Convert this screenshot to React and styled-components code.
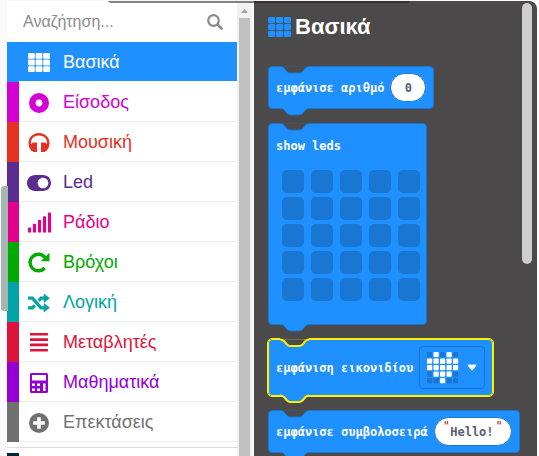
import React from "react";
import styled, { createGlobalStyle } from "styled-components";
import { FaToggleOn, FaSignal } from "react-icons/fa";

const BLUE = "#1e90ff";
const EDGE = "#1976cc";
const YELLOW = "#fff200";
const FLYOUT = "#4b4949";

const Global = createGlobalStyle`
  *, *::before, *::after { box-sizing: border-box; }
  body { margin: 0; background: #fafafd; font-family: "Liberation Sans", Arial, sans-serif; }
`;

const Page = styled.div`
  position: relative;
  display: grid;
  grid-template-columns: 247fr 283fr;
  height: 100vh;
  padding: 1px 2px 0 7px;
  overflow: hidden;
`;

const TopShade = styled.div`
  position: absolute;
  top: 0;
  left: 20%;
  right: 24%;
  height: 3px;
  border-radius: 0 0 12px 12px;
  background: rgba(30, 35, 30, 0.55);
  border-top: 1px solid #f4f4f4;
`;

const SideHandle = styled.div`
  position: absolute;
  top: 186px;
  left: 1px;
  width: 7px;
  height: 125px;
  border-radius: 3px 0 0 3px;
  background: #a5b5b2;
`;

const Toolbox = styled.aside`
  display: flex;
  min-width: 0;
  background: #f1f1f1;
`;

const ToolboxBody = styled.div`
  flex: 1;
  min-width: 0;
  background: #fff;
`;

const SearchBar = styled.label`
  display: flex;
  align-items: center;
  height: 41px;
  padding: 0 14px 0 16px;
`;

const SearchInput = styled.input`
  flex: 1;
  min-width: 0;
  padding: 0;
  border: 0;
  outline: 0;
  background: transparent;
  font: 16px "Liberation Sans", Arial, sans-serif;
  color: #444;
  &::placeholder { color: #8a8a8a; opacity: 1; }
`;

const CategoryList = styled.nav`
  display: flex;
  flex-direction: column;
`;

const Category = styled.button`
  display: flex;
  align-items: center;
  height: 40px;
  padding: 0;
  border: 0;
  background: ${(p) => (p.$active ? p.$color : "#fff")};
  color: ${(p) => (p.$active ? "#fff" : p.$color)};
  font: 18px "Liberation Sans", Arial, sans-serif;
  text-align: left;
  cursor: pointer;
`;

const ColorBar = styled.span`
  width: 12px;
  height: 40px;
  background: ${(p) => p.$color};
`;

const CategoryLabel = styled.span`
  display: flex;
  flex: 1;
  align-items: center;
  gap: 11px;
  height: 40px;
  padding: 2px 0 0 7px;
  border-bottom: 1px solid ${(p) => (p.$active ? "#fff" : "#ececec")};
`;

const IconCell = styled.span`
  display: flex;
  justify-content: center;
  width: 26px;
`;

const NextSection = styled.div`
  height: 60px;
  margin-top: 5px;
  padding-top: 5px;
  border-top: 1px solid #dedede;
`;

const DarkBar = styled.div`
  width: 12px;
  height: 40px;
  background: #002b36;
`;

const ScrollGutter = styled.div`
  display: flex;
  flex-direction: column;
  width: 17px;
  padding: 7px 2px 0 2px;
  border-right: 2px solid #fafafa;
`;

const ScrollThumb = styled.div`
  flex: 1;
  margin-top: 5px;
  background: #c0c0c0;
`;

const Flyout = styled.main`
  display: flex;
  justify-content: space-between;
  min-width: 0;
  padding: 2px 5px 0 14px;
  background: ${FLYOUT};
  border-radius: 0 8px 0 0;
  overflow: hidden;
`;

const FlyoutContent = styled.div`
  display: flex;
  flex-direction: column;
  align-items: flex-start;
`;

const FlyoutThumb = styled.div`
  width: 10px;
  height: 261px;
  border-radius: 5px;
  background: #cecece;
`;

const Title = styled.h1`
  display: flex;
  align-items: center;
  gap: 4px;
  height: 24px;
  margin: 12px 0 27px;
  color: #fff;
  font-size: 22px;
  line-height: 24px;
`;

const TitleIcon = styled.span`
  display: flex;
  color: ${BLUE};
`;

const BlockStack = styled.div`
  display: flex;
  flex-direction: column;
  align-items: flex-start;
  gap: 14px;
`;

const BlockBox = styled.div`
  position: relative;
  display: flex;
  flex-direction: ${(p) => (p.$column ? "column" : "row")};
  align-items: ${(p) => (p.$column ? "flex-start" : "center")};
  gap: ${(p) => (p.$column ? "16px" : "6px")};
  padding: ${(p) => (p.$column ? "14px 6px 23px 7px" : "6px 7px")};
  background: ${BLUE};
  border: 1px solid ${(p) => (p.$selected ? YELLOW : EDGE)};
  border-radius: 4px;
  outline: ${(p) => (p.$selected ? `1px solid ${YELLOW}` : "0")};
  color: #fff;
  font: bold 12px/16px "DejaVu Sans Mono", monospace;
  white-space: nowrap;
`;

const Connector = styled.svg`
  position: absolute;
  left: 11px;
  ${(p) => (p.$bottom ? "bottom: -9px;" : "top: -2px;")}
`;

const NumberInput = styled.input`
  width: 36px;
  height: 29px;
  padding: 0;
  border: 1px solid ${EDGE};
  border-radius: 15px;
  background: #fff;
  color: #575e75;
  font: bold 12px "DejaVu Sans Mono", monospace;
  text-align: center;
`;

const TextPill = styled.label`
  display: flex;
  justify-content: space-between;
  width: 78px;
  height: 29px;
  padding: 0 8px;
  border: 1px solid ${EDGE};
  border-radius: 15px;
  background: #fff;
  color: #a31515;
  font-weight: normal;
`;

const TextInput = styled.input`
  width: 45px;
  padding: 0;
  border: 0;
  background: transparent;
  color: #575e75;
  font: bold 12px "DejaVu Sans Mono", monospace;
`;

const LedGrid = styled.div`
  display: grid;
  grid-template-columns: repeat(5, 22px);
  gap: 4px 7px;
  padding-left: 6px;
`;

const Led = styled.button`
  height: 23px;
  padding: 0;
  border: 0;
  border-radius: 5px;
  background: #1976d2;
`;

const IconPicker = styled.button`
  display: flex;
  align-items: center;
  gap: 8px;
  height: 43px;
  padding: 0 7px;
  border: 1px solid ${EDGE};
  border-radius: 4px;
  background: transparent;
`;

function GridIcon({ width = 22, height = 19 }) {
  return (
    <svg width={width} height={height} viewBox="0 0 22 19" fill="currentColor" aria-hidden="true">
      {[0, 1, 2].map((r) =>
        [0, 1, 2].map((c) => (
          <rect key={`${r}${c}`} x={c * 7.6} y={r * 6.6} width="6.8" height="5.8" rx="1" />
        ))
      )}
    </svg>
  );
}

const TargetIcon = () => (
  <svg width="20" height="20" viewBox="0 0 20 20" aria-hidden="true">
    <circle cx="10" cy="10" r="6.7" fill="none" stroke="currentColor" strokeWidth="6.6" />
  </svg>
);

const HeadphonesIcon = () => (
  <svg width="22" height="19" viewBox="0 0 22 19" fill="currentColor" aria-hidden="true">
    <path d="M11 0C5 0 .5 4.4.5 10c0 3.5 1.400 6.400 3.200 8l1.300.2V19H9V9.400H6.500C5 9.400 3.700 10 2.900 11 2.500 6 6 2.600 11 2.600S19.500 6 19.100 11c-.8-1-2.100-1.600-3.600-1.600H13V19h4v-.8l1.300-.2c1.800-1.600 3.200-4.500 3.200-8C21.500 4.400 17 0 11 0Z" />
  </svg>
);

const RedoIcon = () => (
  <svg width="22" height="21" viewBox="0 0 22 21" aria-hidden="true">
    <path d="M16.600 16A8.300 8.300 0 1 1 17 5.500" fill="none" stroke="currentColor" strokeWidth="3.400" />
    <path d="M21.500.8v8.400h-8.700Z" fill="currentColor" />
  </svg>
);

const ShuffleIcon = () => (
  <svg width="22" height="18" viewBox="0 0 22 18" aria-hidden="true">
    <path
      d="M0 4.200h4.500L13 13.800h4M0 13.800h4.500l2.300-2.600M10.700 6.800 13 4.200h4"
      fill="none"
      stroke="currentColor"
      strokeWidth="3.200"
    />
    <path d="M16 0v8.400L21.500 4.200ZM16 9.600V18l5.500-4.200Z" fill="currentColor" stroke="currentColor" strokeWidth=".6" strokeLinejoin="round" />
  </svg>
);

const LinesIcon = () => (
  <svg width="18" height="19" viewBox="0 0 18 19" fill="currentColor" aria-hidden="true">
    {[0, 1, 2, 3].map((n) => (
      <rect key={n} y={n * 5.3} width="18" height="2.6" rx=".5" />
    ))}
  </svg>
);

const CalculatorIcon = () => (
  <svg width="18" height="20" viewBox="0 0 18 20" aria-hidden="true">
    <rect width="18" height="20" rx="1.500" fill="currentColor" />
    <path fill="#fff" d="M2 2h14v5.500H2zM2 10.500h3V13H2zM7 10.500h3V13H7zM2 15.500h3V18H2zM7 15.500h3V18H7zM13 10.500h2.500V18H13z" />
  </svg>
);

const PlusIcon = () => (
  <svg width="20" height="20" viewBox="0 0 20 20" aria-hidden="true">
    <circle cx="10" cy="10" r="10" fill="currentColor" />
    <path d="M10 4.200v11.600M4.200 10h11.600" stroke="#fff" strokeWidth="3.600" />
  </svg>
);

const SearchIcon = () => (
  <svg width="16" height="16" viewBox="0 0 16 16" fill="none" stroke="#8a8a8a" aria-hidden="true">
    <circle cx="6.500" cy="6.500" r="5.300" strokeWidth="2.200" />
    <path d="M10.600 10.600 14.500 14.500" strokeWidth="2.600" strokeLinecap="round" />
  </svg>
);

const HEART = [".#.#.", "#####", "#####", ".###.", "..#.."];

const HeartIcon = () => (
  <svg width="32" height="32" viewBox="0 0 32 32" aria-hidden="true">
    {HEART.map((row, y) =>
      [...row].map((cell, x) => (
        <rect
          key={`${x}${y}`}
          x={x * 6.5}
          y={y * 6.5}
          width="5.200"
          height="5.200"
          rx="0.800"
          fill={cell === "#" ? "#fff" : "#1976d2"}
        />
      ))
    )}
  </svg>
);

const CaretIcon = () => (
  <svg width="10" height="7" viewBox="0 0 10 7" aria-hidden="true">
    <path d="M1.500.5h7q1.500 0 .6 1.300L6 5.700q-1 1-2 0L.9 1.800Q0 .5 1.500.5Z" fill="#fff" />
  </svg>
);

const ScrollArrow = () => (
  <svg width="11" height="5" viewBox="0 0 11 5" aria-hidden="true">
    <path d="M2 5 5.500 1 9 5Z" fill="#a3a3a3" />
  </svg>
);

function Block({ children, selected, column }) {
  const edge = selected ? YELLOW : EDGE;
  const stroke = selected ? 2 : 1;
  const curve = "M0 1.500C2 1.500 3 2 4 3L7 6.500Q8.500 8 10 8H19Q21 8 22.500 6.500L25.500 3Q27 1.500 29 1.500";
  return (
    <BlockBox $selected={selected} $column={column}>
      <Connector width="30" height="10" viewBox="0 0 30 10" aria-hidden="true">
        <path d="M0 0H29V1.500H0Z" fill={FLYOUT} />
        <path d={curve} fill={FLYOUT} stroke={edge} strokeWidth={stroke} />
      </Connector>
      {children}
      <Connector $bottom width="30" height="10" viewBox="0 0 30 10" aria-hidden="true">
        <path d="M1 0H28V2H1Z" fill={BLUE} />
        <path d={curve} fill={BLUE} stroke={edge} strokeWidth={stroke} />
      </Connector>
    </BlockBox>
  );
}

const categories = [
  { name: "Βασικά", color: BLUE, icon: <GridIcon />, active: true },
  { name: "Είσοδος", color: "#d400d4", icon: <TargetIcon /> },
  { name: "Μουσική", color: "#e63022", icon: <HeadphonesIcon /> },
  { name: "Led", color: "#5c2d91", icon: <FaToggleOn size={24} /> },
  { name: "Ράδιο", color: "#e3008c", icon: <FaSignal size={25} /> },
  { name: "Βρόχοι", color: "#00aa00", icon: <RedoIcon /> },
  { name: "Λογική", color: "#00a4a6", icon: <ShuffleIcon /> },
  { name: "Μεταβλητές", color: "#dc143c", icon: <LinesIcon /> },
  { name: "Μαθηματικά", color: "#9400d3", icon: <CalculatorIcon /> },
  { name: "Επεκτάσεις", color: "#717171", icon: <PlusIcon /> },
];

export default function App() {
  return (
    <Page>
      <Global />
      <Toolbox>
        <ToolboxBody>
          <SearchBar>
            <SearchInput type="text" placeholder="Αναζήτηση..." aria-label="Αναζήτηση" />
            <SearchIcon />
          </SearchBar>
          <CategoryList>
            {categories.map((c) => (
              <Category key={c.name} type="button" $color={c.color} $active={c.active}>
                <ColorBar $color={c.color} />
                <CategoryLabel $active={c.active}>
                  <IconCell>{c.icon}</IconCell>
                  {c.name}
                </CategoryLabel>
              </Category>
            ))}
          </CategoryList>
          <NextSection>
            <DarkBar />
          </NextSection>
        </ToolboxBody>
        <ScrollGutter>
          <ScrollArrow />
          <ScrollThumb />
        </ScrollGutter>
      </Toolbox>
      <Flyout>
        <FlyoutContent>
          <Title>
            <TitleIcon>
              <GridIcon width={23} height={20} />
            </TitleIcon>
            Βασικά
          </Title>
          <BlockStack>
            <Block>
              εμφάνισε αριθμό
              <NumberInput type="text" defaultValue="0" aria-label="αριθμό" />
            </Block>
            <Block column>
              show leds
              <LedGrid>
                {Array.from({ length: 25 }, (_, i) => (
                  <Led key={i} type="button" aria-label={`led ${i + 1}`} />
                ))}
              </LedGrid>
            </Block>
            <Block selected>
              εμφάνιση εικονιδίου
              <IconPicker type="button" aria-label="εικονίδιο">
                <HeartIcon />
                <CaretIcon />
              </IconPicker>
            </Block>
            <Block>
              εμφάνισε συμβολοσειρά
              <TextPill>
                "
                <TextInput type="text" defaultValue="Hello!" aria-label="συμβολοσειρά" />
                "
              </TextPill>
            </Block>
          </BlockStack>
        </FlyoutContent>
        <FlyoutThumb />
      </Flyout>
      <TopShade />
      <SideHandle />
    </Page>
  );
}
